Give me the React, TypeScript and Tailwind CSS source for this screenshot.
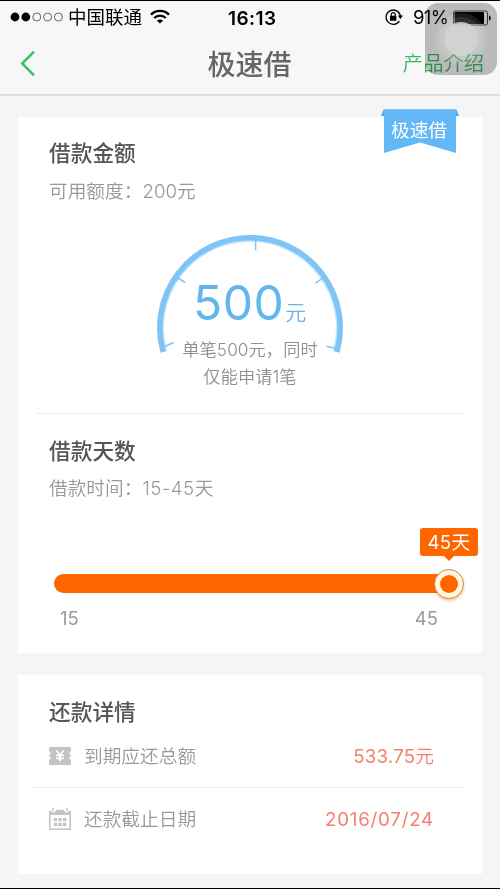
import React from 'react';

function StatusBar() {
  return (
    <div className="flex h-[32px] items-center pl-[10px] pr-[9px] text-black">
      <svg width="54" height="12" viewBox="0 0 54 12">
        <circle cx="5" cy="6" r="4.4" fill="#000" />
        <circle cx="15.8" cy="6" r="4.4" fill="#000" />
        <circle cx="26.8" cy="6" r="4" fill="none" stroke="#444" strokeWidth="0.8" />
        <circle cx="37.6" cy="6" r="4" fill="none" stroke="#444" strokeWidth="0.8" />
        <circle cx="48.4" cy="6" r="4" fill="none" stroke="#444" strokeWidth="0.8" />
      </svg>
      <span className="ml-[4px] w-[82px] text-[18.5px] leading-none">中国联通</span>
      <svg width="20" height="16" viewBox="0 0 20 16" fill="none" stroke="#000" strokeWidth="2.4">
        <path d="M1 5.6C6 .6 14 .6 19 5.6" />
        <path d="M4.2 9C7.6 5.8 12.4 5.8 15.8 9" />
        <path d="M10 14.6L6.8 11.6C8.6 10 11.4 10 13.2 11.6Z" fill="#000" stroke="none" />
      </svg>
      <span className="ml-[58px] mt-[2px] w-[50px] text-[19px] font-semibold leading-none tracking-[0.4px]">16:13</span>
      <svg className="ml-[107px]" width="18" height="18" viewBox="0 0 18 18" fill="none" stroke="#000">
        <path d="M14.3 13.2A7.2 7.2 0 1 1 15.4 8" strokeWidth="1.3" />
        <path d="M12.8 7.6H18L15.4 11Z" fill="#000" stroke="none" />
        <rect x="5" y="7.8" width="6.4" height="5" rx="0.6" fill="#000" stroke="none" />
        <path d="M6.2 8V6.6a2 2 0 0 1 4 0V8" strokeWidth="1.2" />
      </svg>
      <span className="ml-[10px] w-[40px] text-[18.5px] leading-none tracking-[-0.6px]">91%</span>
      <svg className="mt-px" width="38" height="16" viewBox="0 0 38 16">
        <rect x="0.5" y="1" width="34" height="14" rx="2" fill="none" stroke="#333" strokeWidth="0.9" />
        <rect x="1.5" y="2" width="29.5" height="12" rx="1" fill="#000" />
        <path d="M36 5.4C38.4 6.4 38.4 9.6 36 10.6Z" fill="#000" />
      </svg>
    </div>
  );
}

function Header() {
  return (
    <div className="grid h-[61px] grid-cols-3 items-center pl-[20px] pr-[16px]">
      <svg width="16" height="27" viewBox="0 0 16 27" fill="none" stroke="#3cc169" strokeWidth="2.6">
        <path d="M14 1.6L2.2 13.5L14 25.4" />
      </svg>
      <h1 className="-ml-[5px] mt-[3px] text-center text-[28px] font-medium leading-none text-[#666]">极速借</h1>
      <span className="mt-[2px] text-right text-[20.3px] font-[350] leading-none text-[#3cb867]">产品介绍</span>
    </div>
  );
}

function AssistiveTouch() {
  return (
    <>
      <div className="absolute left-[425px] top-[2px] h-[72px] w-[72px] rounded-[13px] bg-[#c0c0c0] mix-blend-multiply" />
      <div className="absolute left-[435px] top-[12px] flex h-[52px] w-[52px] items-center justify-center rounded-full bg-white/10">
        <div className="flex h-[44px] w-[44px] items-center justify-center rounded-full bg-white/10">
          <div className="h-[34px] w-[34px] rounded-full bg-[#d3d3d3]/85" />
        </div>
      </div>
    </>
  );
}

function Gauge() {
  return (
    <div className="relative mx-auto h-[156px] w-[200px]">
      <svg className="absolute inset-0" width="200" height="130" viewBox="150 233 200 130" fill="none">
        <path d="M166.2 352.3A87 87 0 1 1 333.8 352.3" stroke="#c4e6fd" strokeWidth="2" />
        <path d="M163.1 353.1A90.2 90.2 0 1 1 336.9 353.1" stroke="#80c3f5" strokeWidth="5.6" />
        <g stroke="#80c3f5" strokeWidth="1.5">
          <path d="M255.6 241V251.3" />
          <path d="M177 278.5L185.2 283.5" />
          <path d="M315 284.5L323.5 278.5" />
          <path d="M164 348L173.5 343.5" />
          <path d="M326.5 347.2L337 349.8" />
        </g>
      </svg>
      <div className="relative flex items-baseline pl-[43px] pt-[47px] text-[#63b5ee]">
        <span className="text-[48px] leading-[48px] tracking-[0.5px]">500</span>
        <span className="ml-px text-[21px] font-[350] leading-none">元</span>
      </div>
      <p className="relative pt-[9px] text-center text-[17.2px] font-[350] leading-[27px] tracking-[0.1px] text-[#8f8f8f]">
        单笔500元，同时
        <br />
        仅能申请1笔
      </p>
    </div>
  );
}

function DaysSlider() {
  return (
    <div className="pl-[36px] pr-[4px]">
      <div className="flex justify-end">
        <div className="relative h-[28px] w-[58px] rounded-[3px] bg-[#ff6600] text-center text-[18.7px] leading-[29px] tracking-[0.3px] text-white">
          45天
          <div className="absolute left-[24px] top-[28px] border-x-[5px] border-t-[5px] border-x-transparent border-t-[#ff6600]" />
        </div>
      </div>
      <div className="relative mt-[18px] h-[19px] w-[395px] rounded-full bg-[#ff6600]">
        <div className="absolute -right-[15px] -top-[5px] flex h-[30px] w-[30px] items-center justify-center rounded-full border border-[#c98a50] bg-[#fff8dc] shadow-[0_2px_3px_rgba(255,102,0,0.4)]">
          <div className="h-[18px] w-[18px] rounded-full bg-[#ff6600]" />
        </div>
      </div>
      <div className="flex justify-between pl-[6px] pr-[40px] pt-[12px] text-[18.5px] leading-[27px] text-[#999]">
        <span>15</span>
        <span>45</span>
      </div>
    </div>
  );
}

function TicketIcon() {
  return (
    <svg width="22" height="18" viewBox="0 0 22 18">
      <path d="M0 0H22V4L20 6.2L22 8.6L20 11L22 13.4V18H0V13.4L2 11L0 8.6L2 6.2L0 4Z" fill="#c3c3c3" />
      <path d="M7.4 3.4L11 8L14.6 3.4M11 8V14.6M7.2 8.4H14.8M7.2 11.4H14.8" stroke="#fff" strokeWidth="1.6" fill="none" />
    </svg>
  );
}

function CalendarIcon() {
  return (
    <svg width="22" height="22" viewBox="0 0 22 22">
      <path d="M.8 4V21.2H21.2V4" fill="none" stroke="#c3c3c3" strokeWidth="1.6" />
      <path d="M0 3H2.6V4.6H5.6L7.4 1.8H14.6L16.4 4.6H19.4V3H22V7H0Z" fill="#c3c3c3" />
      <path d="M4 0V3.6M18 0V3.6" stroke="#c3c3c3" strokeWidth="1.3" />
      <g fill="#c3c3c3">
        <rect x="4.8" y="10" width="3.4" height="3.2" />
        <rect x="9.4" y="10" width="3.4" height="3.2" />
        <rect x="14" y="10" width="3.4" height="3.2" />
        <rect x="4.8" y="14.8" width="3.4" height="3.2" />
        <rect x="9.4" y="14.8" width="3.4" height="3.2" />
        <rect x="14" y="14.8" width="3.4" height="3.2" />
      </g>
    </svg>
  );
}

interface DetailRowProps {
  icon: React.ReactNode;
  label: string;
  children: React.ReactNode;
}

function DetailRow({ icon, label, children }: DetailRowProps) {
  return (
    <div className="flex h-[62px] items-center pl-[31px] pr-[48px] text-[18.7px] leading-none">
      {icon}
      <span className="ml-[13px] mt-[2px] font-[350] text-[#999]">{label}</span>
      <span className="ml-auto mt-[2px] text-[#f5806f]">{children}</span>
    </div>
  );
}

export default function App() {
  return (
    <div className="relative h-[889px] w-[500px] overflow-hidden border-y border-black bg-[#f5f5f5] font-[Inter,'Noto_Sans_CJK_SC',sans-serif]">
      <div className="border-b-2 border-[#dedede] bg-[#f7f7f7]">
        <StatusBar />
        <Header />
      </div>

      <div className="relative mx-[18px] mt-[21px] h-[536px] bg-white">
        <svg className="absolute left-[363px] top-[-8px]" width="78" height="45" viewBox="0 0 78 45">
          <path d="M2.5 0.5H75.5L78 7H0Z" fill="#56aeef" />
          <path d="M3 0.5H75V44L39 33.5L3 44Z" fill="#62b8f7" />
        </svg>
        <span className="absolute left-[373px] top-[4px] text-[18.7px] leading-[19px] text-white">极速借</span>

        <div className="pl-[31px] pt-[20px]">
          <h2 className="text-[21.7px] font-medium leading-[32px] text-[#555]">借款金额</h2>
          <p className="mt-[9px] text-[18.7px] font-[350] leading-[28px] text-[#999]">可用额度：200元</p>
        </div>
        <div className="pt-[26px]">
          <Gauge />
        </div>

        <div className="ml-[18px] mr-[17px] mt-[25px] border-t border-[#eee]" />

        <div className="pl-[31px] pt-[21px]">
          <h2 className="text-[21.7px] font-medium leading-[32px] text-[#555]">借款天数</h2>
          <p className="mt-[8px] text-[18.7px] font-[350] leading-[28px] text-[#999]">
            借款时间：<span className="tracking-[0.5px]">15-45</span>天
          </p>
        </div>
        <div className="pt-[25px]">
          <DaysSlider />
        </div>
      </div>

      <div className="mx-[18px] mt-[22px] h-[199px] bg-white">
        <h2 className="h-[50px] pl-[31px] pt-[21px] text-[21.7px] font-medium leading-[32px] text-[#555]">还款详情</h2>
        <DetailRow icon={<TicketIcon />} label="到期应还总额">
          <span className="tracking-[0.2px]">533.75</span><span className="font-[350]">元</span>
        </DetailRow>
        <div className="ml-[16px] mr-[17px] border-t border-[#eee]" />
        <DetailRow icon={<CalendarIcon />} label="还款截止日期">
          <span className="tracking-[0.8px]">2016/07/24</span>
        </DetailRow>
      </div>

      <AssistiveTouch />
    </div>
  );
}
